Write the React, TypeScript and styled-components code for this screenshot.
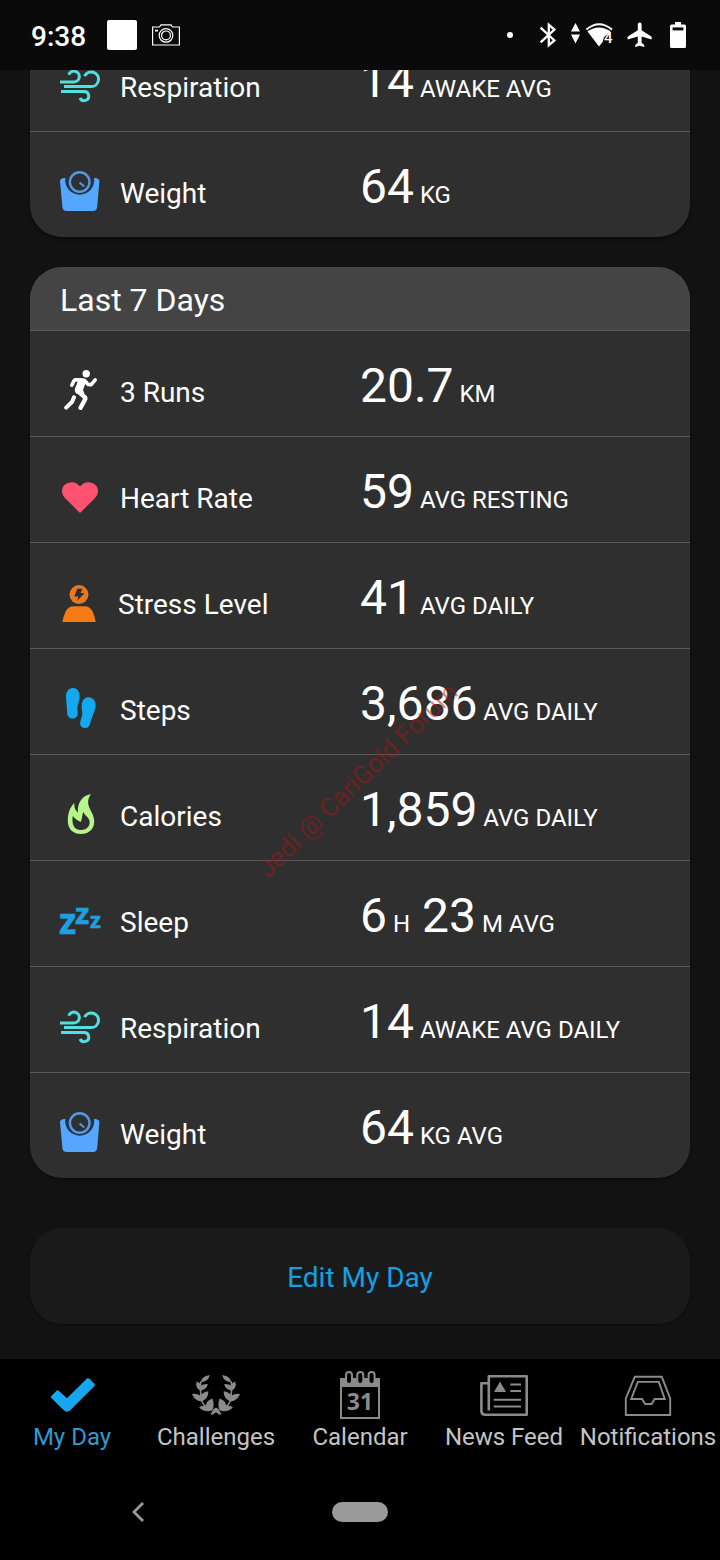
import React from "react";
import styled, { createGlobalStyle } from "styled-components";

const GlobalStyle = createGlobalStyle`
  *, *::before, *::after { box-sizing: border-box; }
  body { margin: 0; background: #000; }
`;

const Screen = styled.div`
  position: relative;
  display: flex;
  flex-direction: column;
  height: 100vh;
  overflow: hidden;
  background: #121212;
  color: #fff;
  font-family: Roboto, "Liberation Sans", sans-serif;
`;

/* ---------- status bar ---------- */

const StatusBar = styled.header`
  display: flex;
  flex: none;
  align-items: center;
  justify-content: space-between;
  height: 70px;
  padding: 0 27px 0 31px;
  background: #0a0a0a;
`;

const StatusStart = styled.div`
  display: flex;
  align-items: center;
`;

const StatusEnd = styled.div`
  display: flex;
  align-items: center;
  gap: 8px;
`;

const Clock = styled.time`
  margin-right: 21px;
  padding-top: 3px;
  font-size: 28px;
  font-weight: 500;
  line-height: 32px;
`;

const AppBadge = styled.span`
  width: 30px;
  height: 30px;
  margin-right: 15px;
  border-radius: 2px;
  background: #fff;
`;

/* ---------- scrolling content ---------- */

/* Reversed column, so that the list opens scrolled to its end. */
const Scroller = styled.main`
  display: flex;
  flex: 1;
  flex-direction: column-reverse;
  min-height: 0;
  overflow-y: auto;
  scrollbar-width: none;
`;

const Content = styled.div`
  display: flex;
  flex: none;
  flex-direction: column;
  gap: 30px;
  padding: 0 30px 35px;
`;

const Card = styled.section`
  overflow: hidden;
  border-radius: 32px;
  background: #2f2f2f;
  box-shadow: 0 2px 3px rgba(0, 0, 0, 0.4);
`;

const CardTitle = styled.h2`
  margin: 0;
  padding: 15px 30px 12px;
  border-bottom: 1px solid #5a5a5a;
  background: #444;
  font-size: 32px;
  font-weight: 400;
  line-height: 36px;
`;

const Rows = styled.ul`
  margin: 0;
  padding: 0;
  list-style: none;
`;

const Row = styled.li`
  display: flex;
  align-items: baseline;
  padding: 27px 0 22px;
  border-bottom: 1px solid #5a5a5a;

  &:last-child {
    border-bottom: 0;
  }
`;

const RowIcon = styled.svg`
  flex: none;
  align-self: flex-start;
  margin: 12px 20px 0 30px;
`;

const RowLabel = styled.span`
  flex: 1;
  font-size: 28px;
  line-height: 32px;
  white-space: nowrap;
`;

const RowValue = styled.span`
  flex: none;
  width: 50%;
  font-size: 48px;
  line-height: 56px;
  white-space: nowrap;
`;

const Unit = styled.span`
  font-size: 24px;
  line-height: 24px;
`;

const EditButton = styled.button`
  height: 96px;
  margin: 20px 0 0;
  padding: 4px 0 0;
  border: 0;
  border-radius: 32px;
  background: #1a1a1a;
  box-shadow: 0 1px 2px rgba(0, 0, 0, 0.4);
  color: #14a0e4;
  font: 400 28px/32px Roboto, "Liberation Sans", sans-serif;
`;

const Watermark = styled.span`
  position: absolute;
  top: 50%;
  left: 50%;
  transform: translate(-51%, -50%) rotate(-44deg);
  color: rgba(165, 22, 22, 0.5);
  font-size: 26px;
  line-height: 32px;
  white-space: nowrap;
  pointer-events: none;
`;

/* ---------- bottom bars ---------- */

const TabBar = styled.nav`
  display: grid;
  flex: none;
  grid-template-columns: repeat(5, 1fr);
  padding: 12px 0 8px;
  background: #000;
`;

const Tab = styled.a<{ $active?: boolean }>`
  display: flex;
  flex-direction: column;
  align-items: center;
  min-width: 0;
  color: ${(p) => (p.$active ? "#3099d0" : "#c4c4c4")};
  font-size: 24px;
  line-height: 37px;
  text-decoration: none;
  white-space: nowrap;
`;

const TabIcon = styled.svg<{ $active?: boolean }>`
  flex: none;
  color: ${(p) => (p.$active ? "#16a7ee" : "#8a8a8a")};
`;

const SystemBar = styled.footer`
  display: grid;
  flex: none;
  grid-template-columns: 5fr 3fr 5fr;
  align-items: center;
  justify-items: center;
  height: 96px;
  background: #000;
`;

const SystemButton = styled.button`
  display: flex;
  align-items: center;
  justify-content: center;
  width: 64px;
  height: 48px;
  padding: 0;
  border: 0;
  background: none;
`;

const HomePill = styled.span`
  width: 56px;
  height: 20px;
  border-radius: 10px;
  background: #9a9a9a;
`;

/* ---------- row icons ---------- */

const RunIcon = () => (
  <RowIcon width="40" height="40" viewBox="0 0 40 40" fill="none" stroke="#fff" strokeLinecap="round" strokeLinejoin="round" aria-hidden="true">
    <circle cx="26.2" cy="3.7" r="3.7" fill="#fff" stroke="none" />
    <path d="M16 8.1 L23.5 8.3 Q26.8 9 26 12 L23 20 L24.5 23.8 L16.5 23.8 Q14 21 15.2 18 L18 11Z" fill="#fff" stroke="none" />
    <path d="M20 9.9 H15.4 Q14.5 9.9 14 10.8 L11.8 15.2" strokeWidth="3.6" />
    <path d="M25 10.8 L28 14.4 L31 14.8 L35.2 9.8" strokeWidth="3.6" />
    <path d="M18.6 21.8 L25 27.4 Q25.6 28.4 25 29.4 L20.6 37.8" strokeWidth="4.4" />
    <path d="M14 27.4 L12 32 L6.2 37.6" strokeWidth="4" />
  </RowIcon>
);

const HeartIcon = () => (
  <RowIcon width="40" height="40" viewBox="0 0 40 40" fill="#ff5271" aria-hidden="true">
    <path d="M20 37 L5.2 22.2 C1 18 1 12 4.8 8.7 C9 5 16 5 20 10.6 C24 5 31 5 35.2 8.7 C39 12 39 18 34.8 22.2 Z" />
  </RowIcon>
);

const StressIcon = () => (
  <RowIcon width="38" height="40" viewBox="0 0 38 40" aria-hidden="true">
    <circle cx="19" cy="12.6" r="9.5" fill="#e8791f" />
    <path d="M17.2 6.8 L22.4 6.8 L20.6 11 L24.5 11.2 L17 19 L18.4 14.4 L14.2 14.4 Z" fill="#2f2f2f" />
    <path d="M2.3 40 Q3.6 34 5.4 30 Q7.8 24.2 14 24.2 H24.4 Q30.4 24.2 32.8 30 Q34.6 34 35.7 40 Z" fill="#f57c14" />
  </RowIcon>
);

const StepsIcon = () => (
  <RowIcon width="40" height="40" viewBox="0 0 40 40" fill="#14a8f0" aria-hidden="true">
    <path d="M12.7 0 C17 0 19.7 3.5 19.7 8 C19.7 13 17.5 16 17.4 20 L17.7 25 C18 28.5 15.5 30.5 12.5 30.5 C9.5 30.5 7.2 28.5 7.2 25 L6 9 C5.8 4 8.5 0 12.7 0 Z" />
    <path d="M28.5 9.3 C33 9.3 35.8 13 35.6 17.5 C35.4 23 32 28 30.6 34 C29.8 38 28 40 25 40 C21.5 40 19.8 37.5 20.2 34.5 C20.6 31 22.4 29 22.3 25 C22.2 22 21.3 20 21.7 16.5 C22.2 12 25 9.3 28.5 9.3 Z" />
  </RowIcon>
);

const CaloriesIcon = () => (
  <RowIcon width="40" height="40" viewBox="0 0 40 40" fill="#b6f58a" fillRule="evenodd" aria-hidden="true">
    <path d="M31 0 C27.6 4.6 27.4 9 29.6 14.2 C31.6 18.6 34.4 22 34.2 28 C34 35.6 28.4 40 21 40 C13.4 40 7.8 35.4 7.8 27 C7.8 19 10 13 14.4 9 C14 12.4 14.8 15 16.4 17 L18 18.4 C17 10 21.6 1.6 31 0 Z M12.8 21.8 C11.4 30.4 14 36 21 36 C27.2 36 30.6 31.6 29.4 26.6 C28.4 23 25.2 21.8 23.2 18 C22.2 21 22.2 24.6 20.8 28 C18 26.8 14.8 25 12.8 21.8 Z" />
  </RowIcon>
);

const SleepIcon = () => (
  <RowIcon width="40" height="40" viewBox="0 0 40 40" overflow="visible" fill="#1ba1e2" stroke="#1ba1e2" strokeWidth="0.6" fontFamily="'Noto Sans', 'Open Sans', sans-serif" fontWeight="700" aria-hidden="true">
    <text x="-1" y="34" fontSize="35">z</text>
    <text x="15" y="24" fontSize="29">z</text>
    <text x="30" y="28" fontSize="22">z</text>
  </RowIcon>
);

const RespirationIcon = () => (
  <RowIcon width="40" height="40" viewBox="0 0 40 40" fill="none" stroke="#4fe0e0" strokeWidth="3" aria-hidden="true">
    <path d="M0 16.9 H14 A5.4 5.4 0 1 0 8.8 9.8" />
    <path d="M4 21.6 H31.2 A7.3 7.3 0 1 0 24.6 11.2" />
    <path d="M1 26.4 H24.2 A4.6 4.6 0 1 1 20 33" />
  </RowIcon>
);

const WeightIcon = () => (
  <RowIcon width="40" height="40" viewBox="0 0 40 40" aria-hidden="true">
    <path d="M0 10 Q0 7.6 4 7 H35.4 Q39.4 7.6 39.4 10 L37.2 36 Q36.8 40 33 40 H6.6 Q2.8 40 2.4 36 Z" fill="#55a6ff" />
    <path d="M5.4 6.8 A14.5 14.5 0 1 0 34 6.8 Z" fill="#22344a" />
    <circle cx="19.7" cy="11" r="9.8" fill="#2c3035" stroke="#5a96dc" strokeWidth="2.4" />
    <path d="M19.6 11.4 L24.2 15.4" stroke="#5a96dc" strokeWidth="2" />
  </RowIcon>
);

/* ---------- tab icons ---------- */

const CheckIcon = () => (
  <TabIcon $active width="48" height="48" viewBox="0 0 48 48" fill="currentColor" stroke="currentColor" strokeWidth="3" strokeLinejoin="round" aria-hidden="true">
    <path d="M4.4 26 L9.6 20.8 L19 29.4 L40 8.6 L45.4 14 L21.4 38 Q19 40.4 16.6 38 Z" />
  </TabIcon>
);

const LaurelBranch = () => (
  <>
    <path d="M9.2 11.2 Q9 5.6 17.8 4 Q16.4 10.6 9.2 11.2 Z" />
    <path d="M4.6 10.4 Q8 11.4 9.2 14.6 Q11.4 12.6 15.8 13 Q14.6 19 8.4 19.4 Q3 17.4 4.6 10.4 Z" />
    <path d="M0 23 Q5.4 22.4 8.4 24.6 Q10.6 21 16.4 20.2 Q16.4 28 9.4 30.4 Q2.4 29.8 0 23 Z" />
    <path d="M7 36.2 Q10.4 34.4 13.6 34.8 Q14.4 29.4 20.4 27.4 Q22.8 33.6 20.4 39.6 Q12 42 7 36.2 Z" />
    <path d="M8.8 10.4 L8.4 18 L9.2 29 Q11.4 34 15 37" fill="none" stroke="currentColor" strokeWidth="1.6" />
  </>
);

const LaurelIcon = () => (
  <TabIcon width="48" height="48" viewBox="0 0 48 48" fill="currentColor" aria-hidden="true">
    <LaurelBranch />
    <g transform="matrix(-1 0 0 1 48 0)">
      <LaurelBranch />
    </g>
    <path d="M24 36.4 Q27.2 37.4 27.6 40 L29.6 43.4 Q27 44.4 24 41.2 Q21 44.4 18.4 43.4 L20.4 40 Q20.8 37.4 24 36.4 Z" stroke="#000" strokeWidth="1" paintOrder="stroke" />
  </TabIcon>
);

const CalendarIcon = () => (
  <TabIcon width="48" height="48" viewBox="0 0 48 48" fill="none" stroke="currentColor" strokeWidth="2" aria-hidden="true">
    <rect x="5" y="8" width="38" height="39" />
    <rect x="4" y="7" width="40" height="9" fill="currentColor" stroke="none" />
    <rect x="10" y="1" width="6" height="12" rx="3" fill="#000" />
    <rect x="21.3" y="1" width="6" height="12" rx="3" fill="#000" />
    <rect x="32.6" y="1" width="6" height="12" rx="3" fill="#000" />
    <text x="24" y="39" fill="currentColor" stroke="none" fontFamily="'Open Sans', sans-serif" fontSize="23" fontWeight="700" textAnchor="middle">31</text>
  </TabIcon>
);

const NewsIcon = () => (
  <TabIcon width="48" height="48" viewBox="0 0 48 48" fill="none" stroke="currentColor" strokeWidth="2.6" aria-hidden="true">
    <path d="M8 12.2 H1.4 V40 Q1.4 43.7 5.2 43.7 H46.7 V5.3 H8.8 V39.4" strokeLinejoin="round" />
    <path d="M14 21 L20 10.6 L26 21 Z" fill="currentColor" stroke="none" />
    <path d="M30.3 13.5 H41 M30.3 20.1 H41 M13.7 28.7 H41 M13.7 35.5 H41" strokeWidth="2" />
  </TabIcon>
);

const InboxIcon = () => (
  <TabIcon width="48" height="48" viewBox="0 0 48 48" fill="none" stroke="currentColor" strokeWidth="1.9" aria-hidden="true">
    <path d="M1.8 44 V27.4 L10.8 5.8 H37.8 L46.2 27.4 V44 Z" />
    <path d="M7.2 28 L13.8 10.9 H34.8 L40.8 28 H30.6 L27.6 33 H21 L18 28 Z" />
  </TabIcon>
);

/* ---------- data ---------- */

interface Metric {
  icon: React.ComponentType;
  label: string;
  value: React.ReactNode;
}

const today: Metric[] = [
  { icon: RespirationIcon, label: "Respiration", value: <>14<Unit> AWAKE AVG</Unit></> },
  { icon: WeightIcon, label: "Weight", value: <>64<Unit> KG</Unit></> },
];

const week: Metric[] = [
  { icon: RunIcon, label: "3 Runs", value: <>20.7<Unit> KM</Unit></> },
  { icon: HeartIcon, label: "Heart Rate", value: <>59<Unit> AVG RESTING</Unit></> },
  { icon: StressIcon, label: "Stress Level", value: <>41<Unit> AVG DAILY</Unit></> },
  { icon: StepsIcon, label: "Steps", value: <>3,686<Unit> AVG DAILY</Unit></> },
  { icon: CaloriesIcon, label: "Calories", value: <>1,859<Unit> AVG DAILY</Unit></> },
  { icon: SleepIcon, label: "Sleep", value: <>6<Unit> H</Unit> 23<Unit> M AVG</Unit></> },
  { icon: RespirationIcon, label: "Respiration", value: <>14<Unit> AWAKE AVG DAILY</Unit></> },
  { icon: WeightIcon, label: "Weight", value: <>64<Unit> KG AVG</Unit></> },
];

const tabs = [
  { icon: CheckIcon, label: "My Day", active: true },
  { icon: LaurelIcon, label: "Challenges", active: false },
  { icon: CalendarIcon, label: "Calendar", active: false },
  { icon: NewsIcon, label: "News Feed", active: false },
  { icon: InboxIcon, label: "Notifications", active: false },
];

const MetricRows = ({ metrics }: { metrics: Metric[] }) => (
  <Rows>
    {metrics.map(({ icon: Icon, label, value }) => (
      <Row key={label}>
        <Icon />
        <RowLabel>{label}</RowLabel>
        <RowValue>{value}</RowValue>
      </Row>
    ))}
  </Rows>
);

const Status = () => (
  <StatusBar>
    <StatusStart>
      <Clock>9:38</Clock>
      <AppBadge />
      <svg width="28" height="22" viewBox="0 0 28 22" fill="none" stroke="#fff" strokeWidth="1.2" aria-hidden="true">
        <path d="M0.6 3 H7.4 L9 0.8 H19 L20.6 3 H27.4 V21 H0.6 Z" />
        <circle cx="14" cy="11.4" r="6.8" />
        <circle cx="14" cy="11.4" r="4.4" />
        <path d="M3 6.6 H6" strokeWidth="1.8" />
      </svg>
    </StatusStart>
    <StatusEnd>
      <svg width="30" height="30" viewBox="0 0 30 30" aria-hidden="true">
        <circle cx="15" cy="15" r="3" fill="#fff" />
      </svg>
      <svg width="30" height="30" viewBox="0 0 30 30" fill="none" stroke="#fff" strokeWidth="2.3" aria-hidden="true">
        <path d="M7.6 7.6 L21.4 20.4 L15.8 25.2 V4.8 L21.4 9.6 L7.6 22.4" />
      </svg>
      <svg width="46" height="30" viewBox="0 0 46 30" fill="#fff" aria-hidden="true">
        <path d="M0 11.6 L4.5 3 L9 11.6 Z M0 14.6 H9 L4.5 23.4 Z" />
        <path d="M15.4 9.6 Q28 -1 41 9.6" fill="none" stroke="#fff" strokeWidth="2" />
        <path d="M16.4 11.2 Q28 3.6 39.6 11.2 L37 14 L33 17 L31.6 22 L28 26.4 Z" />
        <text x="33" y="23" fontFamily="Roboto, sans-serif" fontSize="15" fontWeight="500">4</text>
      </svg>
      <svg width="30" height="30" viewBox="0 0 30 30" fill="#fff" aria-hidden="true">
        <path d="M26.6 19.4 V16.8 L16.6 10.2 V4.4 Q16.6 2.4 14.7 2.4 Q12.8 2.4 12.8 4.4 V10.2 L2.6 16.8 V19.4 L12.8 16.6 V22.8 L10.2 25 V27 L14.7 25.8 L19.2 27 V25 L16.6 22.8 V16.6 Z" />
      </svg>
      <svg width="30" height="30" viewBox="0 0 30 30" fill="#fff" aria-hidden="true">
        <path d="M12 2 H18 V4.4 H21.4 Q23 4.4 23 6 V26.4 Q23 28 21.4 28 H8.6 Q7 28 7 26.4 V6 Q7 4.4 8.6 4.4 H12 Z" />
        <path d="M9.6 7.4 H20.4 V10.4 H9.6 Z" fill="#0a0a0a" />
      </svg>
    </StatusEnd>
  </StatusBar>
);

export default function App() {
  return (
    <Screen>
      <GlobalStyle />
      <Status />
      <Scroller>
        <Content>
          <Card>
            <MetricRows metrics={today} />
          </Card>
          <Card>
            <CardTitle>Last 7 Days</CardTitle>
            <MetricRows metrics={week} />
          </Card>
          <EditButton type="button">Edit My Day</EditButton>
        </Content>
      </Scroller>
      <TabBar>
        {tabs.map(({ icon: Icon, label, active }) => (
          <Tab key={label} href="#" $active={active} aria-current={active ? "page" : undefined}>
            <Icon />
            {label}
          </Tab>
        ))}
      </TabBar>
      <SystemBar>
        <SystemButton type="button" aria-label="Back">
          <svg width="20" height="20" viewBox="0 0 20 20" fill="none" stroke="#9a9a9a" strokeWidth="2.8" aria-hidden="true">
            <path d="M15 1 L6 10 L15 19" />
          </svg>
        </SystemButton>
        <SystemButton type="button" aria-label="Home">
          <HomePill />
        </SystemButton>
      </SystemBar>
      <Watermark>Jedi @ CariGold Forum</Watermark>
    </Screen>
  );
}
